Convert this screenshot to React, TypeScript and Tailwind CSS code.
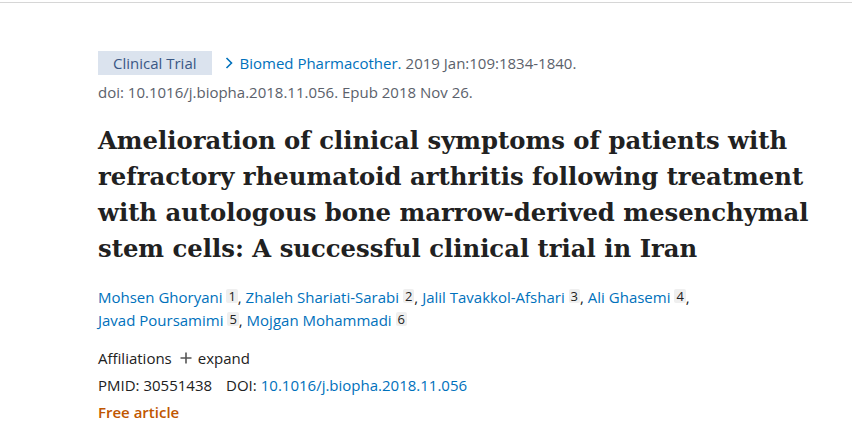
const authors = [
  { name: "Mohsen Ghoryani", n: 1 },
  { name: "Zhaleh Shariati-Sarabi", n: 2 },
  { name: "Jalil Tavakkol-Afshari", n: 3 },
  { name: "Ali Ghasemi", n: 4 },
  { name: "Javad Poursamimi", n: 5 },
  { name: "Mojgan Mohammadi", n: 6 },
];

function AuthorList() {
  return (
    <div className="mt-[19px] w-[620px] text-[15px] leading-[23px] text-[#212121]">
      {authors.map((a, i) => (
        <span key={a.n}>
          <a className="text-[#0071bc]">{a.name}</a>{" "}
          <sup className="relative top-[-2px] inline-block rounded-[2px] bg-[#efefef] px-[2px] text-[13px] leading-[14px] text-[#212121]">
            {a.n}
          </sup>
          {i < authors.length - 1 && ", "}
        </span>
      ))}
    </div>
  );
}

export default function App() {
  return (
    <div
      className="min-h-[432px] w-[852px] bg-white"
      style={{ fontFamily: '"Open Sans", "Noto Sans", sans-serif' }}
    >
      <div className="h-[2px]" />
      <div className="h-px bg-[#d6d6d6]" />

      <div className="pl-[98px] pt-[48px]">
        {/* citation header */}
        <div className="flex items-center text-[15px] leading-[24px]">
          <span className="bg-[#dbe3ee] px-[15px] text-[#3a5885]">Clinical Trial</span>
          <svg width="10" height="14" viewBox="0 0 10 14" className="ml-[12px] mr-[6px]">
            <path d="M2.5 2 L7.5 7 L2.5 12" stroke="#0071bc" strokeWidth="1.6" fill="none" />
          </svg>
          <a className="text-[#0071bc]">Biomed Pharmacother.</a>
          <span className="ml-[4px] text-[#5b616b]">2019 Jan:109:1834-1840.</span>
        </div>
        <div className="mt-[6px] text-[15px] leading-[22px] text-[#5b616b]">
          doi: 10.1016/j.biopha.2018.11.056. Epub 2018 Nov 26.
        </div>

        {/* title */}
        <h1
          className="mt-[20px] w-[730px] text-[24.3px] font-bold leading-[36px] text-[#212121]"
          style={{ fontFamily: '"DejaVu Serif", "Liberation Serif", serif' }}
        >
          Amelioration of clinical symptoms of patients with refractory rheumatoid arthritis
          following treatment with autologous bone marrow-derived mesenchymal stem cells: A
          successful clinical trial in Iran
        </h1>

        <AuthorList />

        <div className="mt-[14px] flex items-center text-[15px] leading-[24px] text-[#212121]">
          <span>Affiliations</span>
          <svg width="14" height="14" viewBox="0 0 14 14" className="ml-[7px] mr-[5px]">
            <path d="M7 1.5 V12.5 M1.5 7 H12.5" stroke="#555" strokeWidth="1.6" />
          </svg>
          <span>expand</span>
        </div>
        <div className="mt-[3px] flex text-[15px] leading-[24px] text-[#212121]">
          <span>PMID: 30551438</span>
          <span className="ml-[14px]">DOI:</span>
          <a className="ml-[4px] text-[#0071bc]">10.1016/j.biopha.2018.11.056</a>
        </div>
        <div className="mt-[3px] text-[15px] font-semibold leading-[24px] text-[#c05600]">
          Free article
        </div>
      </div>
    </div>
  );
}
